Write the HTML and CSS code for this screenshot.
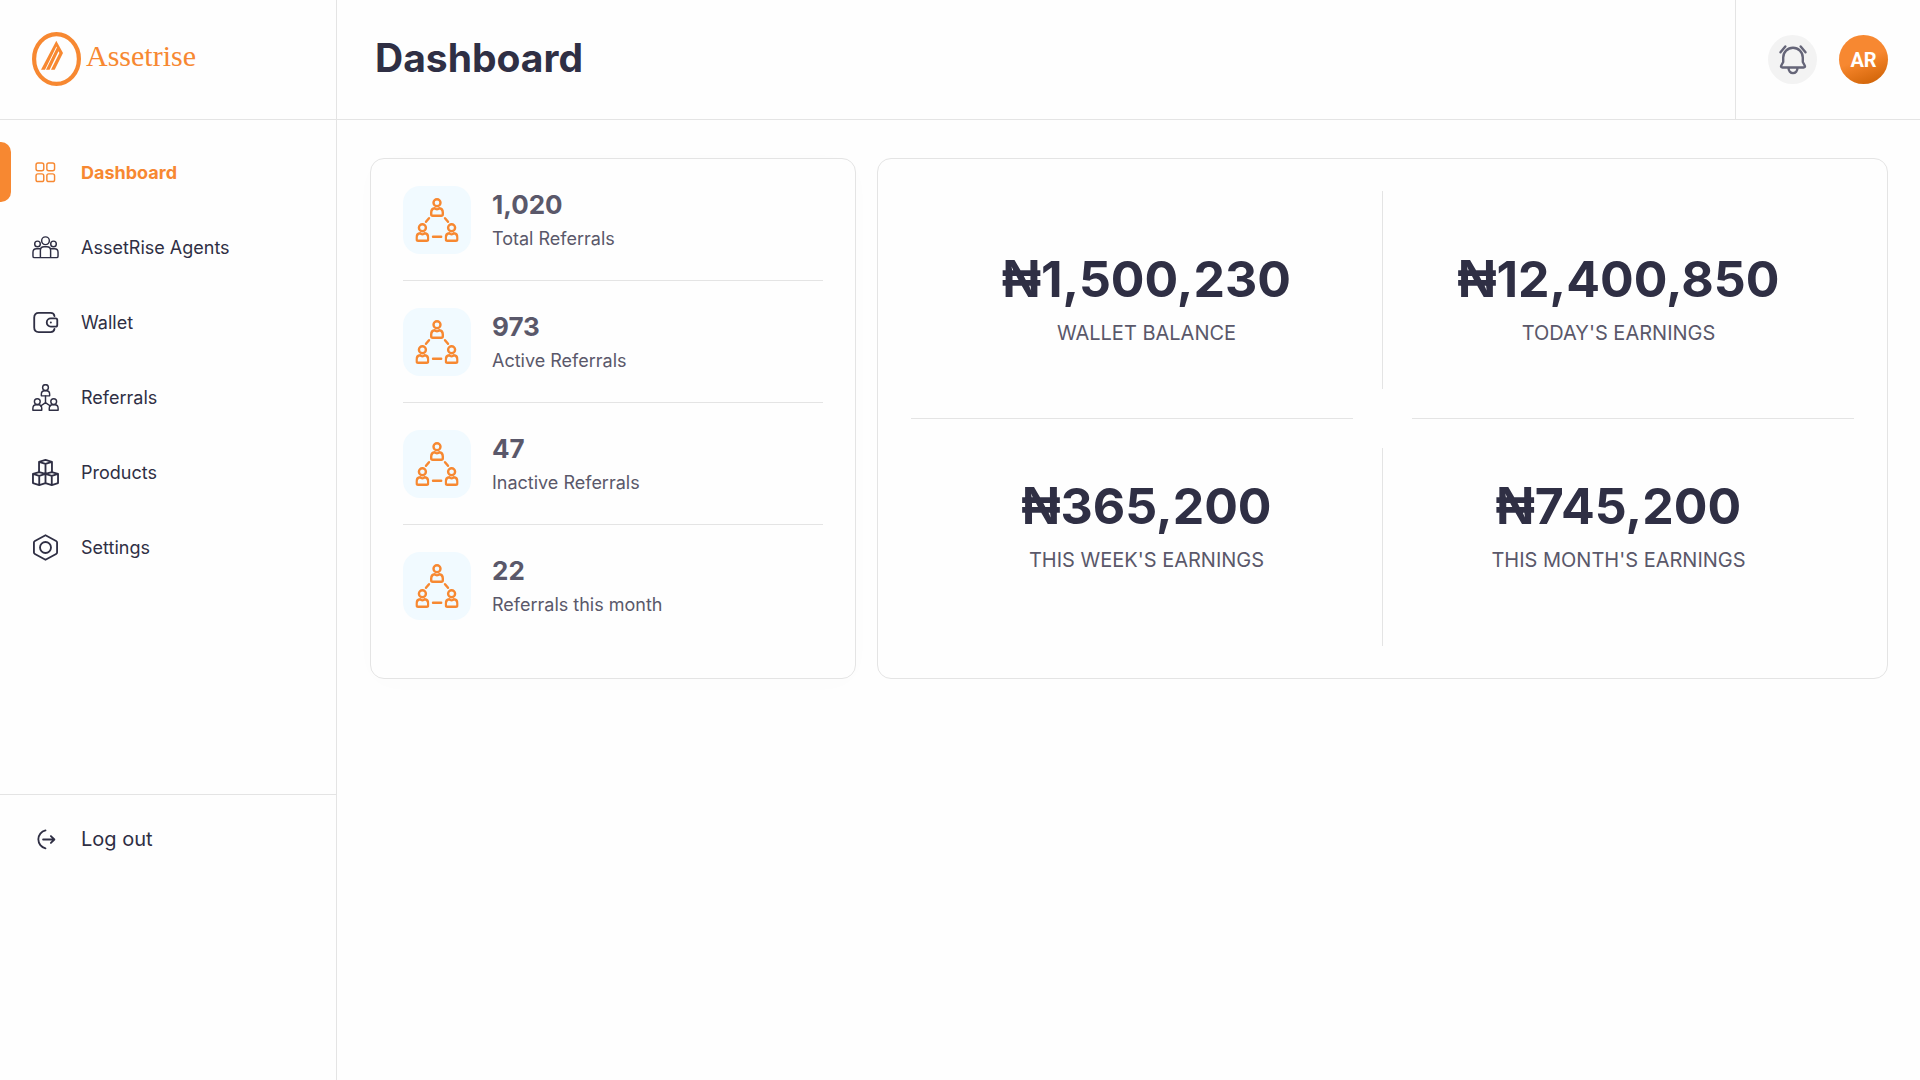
FILE: index.html
```html
<!DOCTYPE html>
<html lang="en">
<head>
<meta charset="utf-8">
<meta name="viewport" content="width=device-width, initial-scale=1">
<title>Assetrise Dashboard</title>
<link rel="stylesheet" href="styles.css">
</head>
<body>
<svg class="sprite" aria-hidden="true">
  <symbol id="person" viewBox="0 0 14 19">
    <circle cx="7" cy="4.7" r="3.5"/>
    <path d="M4.800 10.200C2.400 10.400 1.200 12.200 1.200 14.600v1.600c0 1 .6 1.500 1.500 1.500h8.600c.9 0 1.500-.5 1.500-1.500v-1.600c0-2.400-1.200-4.200-3.600-4.400-1 1.500-3.400 1.500-4.400 0z"/>
  </symbol>
  <symbol id="network" viewBox="0 0 44 44">
    <use href="#person" x="15" y="0" width="14" height="19"/>
    <use href="#person" x="0.4" y="25" width="14" height="19"/>
    <use href="#person" x="29.600" y="25" width="14" height="19"/>
    <path d="M14 20.200l-3 3.600M30 20.200l3 3.600M18 38.700h8.200"/>
  </symbol>
</svg>
<div class="app">
  <aside class="sidebar">
    <a class="brand" href="#">
      <svg class="brand-mark" viewBox="0 0 49 54" aria-hidden="true">
        <ellipse cx="24.500" cy="27" rx="22.400" ry="24.800" fill="none" stroke="currentColor" stroke-width="4.200"/>
        <path fill="currentColor" d="M24.300 8.700L31 21 22.700 37.700H19L27.400 21 26.500 19.200 17.600 37.700H14L24.900 15.600 24.400 14.600 13 37.700H9z"/>
      </svg>
      <span class="brand-name">Assetrise</span>
    </a>
    <nav class="nav">
      <a class="nav-item active" href="#">
        <svg class="icon" viewBox="0 0 28 28" aria-hidden="true"><rect x="4.200" y="4.200" width="8" height="8" rx="2"/><rect x="15.400" y="4.200" width="8" height="8" rx="2"/><rect x="4.200" y="15.400" width="8" height="8" rx="2"/><rect x="15.400" y="15.400" width="8" height="8" rx="2"/></svg>
        <span>Dashboard</span>
      </a>
      <a class="nav-item" href="#">
        <svg class="icon" viewBox="0 0 28 28" aria-hidden="true"><circle cx="14" cy="7" r="4"/><circle cx="5.700" cy="10.300" r="2.900"/><circle cx="22.300" cy="10.300" r="2.900"/><path d="M8.700 24.500V17c0-2.200 1.600-3.800 3.800-3.800h3c2.200 0 3.800 1.600 3.800 3.800v7.500M8.500 15.300H4.700C2.500 15.300 1 16.800 1 19v4c0 1 .6 1.500 1.500 1.500h23c.9 0 1.500-.5 1.500-1.500v-4c0-2.200-1.500-3.700-3.700-3.700h-3.800"/></svg>
        <span>AssetRise Agents</span>
      </a>
      <a class="nav-item" href="#">
        <svg class="icon bold" viewBox="0 0 28 28" aria-hidden="true"><path d="M23.300 7.300C23 5.200 21.500 4 19.300 4H7C4 4 2.300 5.700 2.300 8.700v10.600c0 3 1.700 4.700 4.700 4.700h12.300c2.200 0 3.700-1.200 4-3.300"/><path d="M19.500 9.800h5c1 0 1.700.7 1.700 1.700v5c0 1-.7 1.700-1.700 1.700h-5a4.200 4.200 0 0 1 0-8.400z"/><path d="M19.500 14h.1"/></svg>
        <span>Wallet</span>
      </a>
      <a class="nav-item" href="#">
        <svg class="icon" viewBox="0 0 28 28" aria-hidden="true"><circle cx="14" cy="3.700" r="3"/><path d="M9.700 12.300V10.500c0-2 1.600-3.500 3.500-3.500h1.600c1.900 0 3.500 1.500 3.500 3.500v1.800z"/><circle cx="5.500" cy="18.200" r="3"/><path d="M.9 27.200v-1.900c0-2.200 1.500-3.800 3.500-3.800h2.200c2 0 3.500 1.600 3.500 3.800v1.900z"/><circle cx="22.500" cy="18.200" r="3"/><path d="M17.900 27.200v-1.900c0-2.200 1.500-3.800 3.500-3.800h2.200c2 0 3.500 1.600 3.500 3.800v1.900zM14 12.300v7M14 19.300l-5 3.500M14 19.300l5 3.500"/></svg>
        <span>Referrals</span>
      </a>
      <a class="nav-item" href="#">
        <svg class="icon bold" viewBox="0 0 28 28" aria-hidden="true"><path d="M7.300 13V3L14 1l6.700 2v10M7.300 3L14 5l6.700-2M14 5v9.500M1 15.500L7.500 13.500 14 15.500v9.500L7.500 27 1 25zM1 15.500l6.500 2 6.500-2M7.500 17.500V27M14 15.500l6.500-2 6.500 2V25l-6.500 2L14 25M14 15.500l6.500 2 6.500-2M20.500 17.500V27"/></svg>
        <span>Products</span>
      </a>
      <a class="nav-item" href="#">
        <svg class="icon bold" viewBox="0 0 28 28" aria-hidden="true"><path d="M14 1.300L25 7.300c.7.400 1 .7 1 1.400v10.600c0 .7-.3 1-1 1.400L14 26.700 3 20.700c-.7-.4-1-.7-1-1.400V8.700c0-.7.300-1 1-1.400z"/><circle cx="14" cy="14" r="5.700"/></svg>
        <span>Settings</span>
      </a>
    </nav>
    <div class="sidebar-foot">
      <button class="nav-item logout" type="button">
        <svg class="icon bold" viewBox="0 0 28 28" aria-hidden="true"><path d="M14 4.500A9.600 9.600 0 0 0 14 23.200M11.500 14H23M19.600 10.400L23.200 14l-3.600 3.600"/></svg>
        <span>Log out</span>
      </button>
    </div>
  </aside>
  <div class="page">
    <header class="topbar">
      <h1 class="title">Dashboard</h1>
      <div class="account">
        <button class="round bell" type="button" aria-label="Notifications">
          <svg viewBox="0 0 28 30" aria-hidden="true"><path d="M4.200 17V12.500a9.800 9.800 0 0 1 19.600 0V17l1.900 3.500c.6 1.200.1 2-1.100 2H3.400c-1.200 0-1.700-.8-1.100-2zM9.500 22.800c0 3.200 2 5.300 4.500 5.300s4.500-2.100 4.500-5.300M1.500 7.300L6.300 1.500M26.500 7.300L21.700 1.500"/></svg>
        </button>
        <button class="round avatar" type="button">AR</button>
      </div>
    </header>
    <main class="content">
      <section class="card referrals">
        <div class="referral"><span class="tile"><svg aria-hidden="true"><use href="#network"/></svg></span><div><p class="count">1,020</p><p class="caption">Total Referrals</p></div></div>
        <div class="referral"><span class="tile"><svg aria-hidden="true"><use href="#network"/></svg></span><div><p class="count">973</p><p class="caption">Active Referrals</p></div></div>
        <div class="referral"><span class="tile"><svg aria-hidden="true"><use href="#network"/></svg></span><div><p class="count">47</p><p class="caption">Inactive Referrals</p></div></div>
        <div class="referral"><span class="tile"><svg aria-hidden="true"><use href="#network"/></svg></span><div><p class="count">22</p><p class="caption">Referrals this month</p></div></div>
      </section>
      <section class="card earnings">
        <div class="stat top left"><p class="amount"><span class="naira">₦</span>1,500,230</p><p class="label">WALLET BALANCE</p></div>
        <div class="stat top right"><p class="amount"><span class="naira">₦</span>12,400,850</p><p class="label">TODAY'S EARNINGS</p></div>
        <div class="stat bottom left"><p class="amount"><span class="naira">₦</span>365,200</p><p class="label">THIS WEEK'S EARNINGS</p></div>
        <div class="stat bottom right"><p class="amount"><span class="naira">₦</span>745,200</p><p class="label">THIS MONTH'S EARNINGS</p></div>
        <span class="rule v-top"></span>
        <span class="rule v-bottom"></span>
        <span class="rule h-left"></span>
        <span class="rule h-right"></span>
      </section>
    </main>
  </div>
</div>
</body>
</html>
```
FILE: styles.css
```css
:root {
  --orange: #f78831;
  --ink: #2f2f44;
  --muted: #5a586a;
  --line: #e4e4e4;
}

* { box-sizing: border-box; }

body {
  margin: 0;
  background: #fefefe;
  color: var(--ink);
  font-family: Inter, "Liberation Sans", sans-serif;
}

h1, p { margin: 0; }
a { color: inherit; text-decoration: none; }
button { border: 0; padding: 0; background: none; color: inherit; font: inherit; cursor: pointer; }
.sprite { display: none; }

.app {
  display: grid;
  grid-template-columns: 337px 1fr;
  min-height: 100vh;
}

.sidebar { border-right: 1px solid var(--line); }

.brand {
  display: flex;
  align-items: center;
  gap: 5px;
  height: 120px;
  padding: 0 32px 2px;
  border-bottom: 1px solid var(--line);
  color: var(--orange);
}
.brand-mark { width: 49px; height: 54px; }
.brand-name {
  padding-bottom: 6px;
  font-family: "Liberation Serif", serif;
  font-size: 30px;
  line-height: 32px;
}

.nav {
  display: flex;
  flex-direction: column;
  gap: 15px;
  min-height: 674px;
  padding-top: 22px;
}
.nav-item {
  display: flex;
  align-items: center;
  gap: 22px;
  height: 60px;
  padding-left: 32px;
  font-size: 18px;
}
.nav-item.active {
  padding-left: 21px;
  color: var(--orange);
  font-weight: 700;
}
.nav-item.active::before {
  content: "";
  width: 11px;
  height: 60px;
  margin-left: -21px;
  margin-right: -1px;
  border-radius: 0 10px 10px 0;
  background: var(--orange);
}
.icon {
  flex: none;
  width: 27px;
  height: 27px;
  fill: none;
  stroke: currentColor;
  stroke-width: 1.5;
  stroke-linecap: round;
  stroke-linejoin: round;
}
.icon.bold { stroke-width: 1.9; }

.sidebar-foot {
  padding-top: 14px;
  border-top: 1px solid var(--line);
}
.logout { width: 100%; font-size: 20px; }

.topbar {
  display: flex;
  align-items: center;
  justify-content: space-between;
  height: 120px;
  padding: 0 32px 0 38px;
  border-bottom: 1px solid var(--line);
}
.title {
  padding-bottom: 4px;
  font-size: 39px;
  line-height: 48px;
  font-weight: 700;
}
.account {
  display: flex;
  align-items: center;
  gap: 22px;
  height: 100%;
  padding-left: 32px;
  border-left: 1px solid var(--line);
}
.round {
  display: grid;
  place-items: center;
  width: 49px;
  height: 49px;
  border-radius: 50%;
}
.bell { background: #f3f3f3; color: #656578; }
.bell svg {
  width: 28px;
  height: 30px;
  fill: none;
  stroke: currentColor;
  stroke-width: 2.4;
  stroke-linecap: round;
  stroke-linejoin: round;
}
.avatar {
  background: linear-gradient(160deg, #f78831 48%, #ec7c21 62%, #d2660a 90%);
  color: #fff;
  font-family: Roboto, sans-serif;
  font-size: 20px;
  font-weight: 700;
}

.content {
  display: grid;
  grid-template-columns: 486fr 1011fr;
  gap: 21px;
  padding: 38px 32px 38px 33px;
}
.card {
  border: 1px solid var(--line);
  border-radius: 14px;
}

.referrals {
  padding: 0 32px 31px;
  box-shadow: 0 4px 32px rgba(0, 0, 0, 0.01);
}
.referral {
  display: flex;
  align-items: center;
  gap: 21px;
  padding: 27px 0 26px;
  border-bottom: 1px solid var(--line);
}
.referral:last-child { border-bottom-color: transparent; }
.tile {
  display: grid;
  place-items: center;
  flex: none;
  width: 68px;
  height: 68px;
  border-radius: 17px;
  background: #f1faff;
}
.tile svg {
  width: 44px;
  height: 44px;
  fill: none;
  stroke: var(--orange);
  stroke-width: 2.4;
  stroke-linecap: round;
  stroke-linejoin: round;
}
.count { color: var(--muted); font-size: 26px; line-height: 37px; font-weight: 700; }
.caption { color: var(--muted); font-size: 18px; line-height: 31px; }

.earnings {
  display: grid;
  grid-template-columns: 1fr 29px 1px 29px 1fr;
  grid-template-rows: 1fr 29px 1px 29px 1fr;
  padding: 32px 33px;
}
.stat { padding-top: 57px; text-align: center; }
.top { grid-row: 1 / 3; }
.bottom { grid-row: 3 / 6; }
.left { grid-column: 1 / 3; }
.right { grid-column: 4 / 6; }
.amount {
  font-size: 50px;
  line-height: 62px;
  font-weight: 700;
}
.naira {
  font-family: "Liberation Sans", Arial, sans-serif;
  font-size: 54px;
  line-height: 54px;
}
.label { color: var(--muted); font-size: 20px; line-height: 46px; }
.rule { background: var(--line); }
.v-top { grid-area: 1 / 3 / 2 / 4; }
.v-bottom { grid-area: 5 / 3 / 6 / 4; }
.h-left { grid-area: 3 / 1 / 4 / 2; }
.h-right { grid-area: 3 / 5 / 4 / 6; }
```
